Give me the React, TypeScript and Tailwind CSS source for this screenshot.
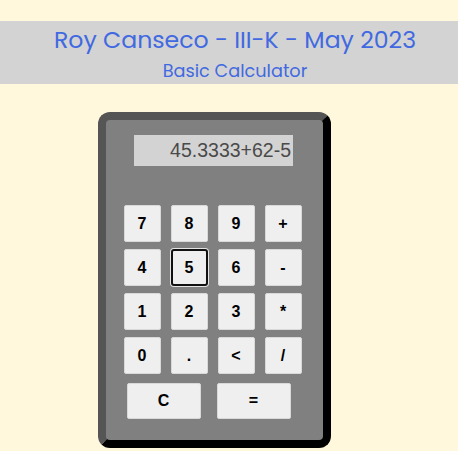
const rows = [
  ['7', '8', '9', '+'],
  ['4', '5', '6', '-'],
  ['1', '2', '3', '*'],
  ['0', '.', '<', '/'],
];

// Single calculator key
function Key({ label, focused, wide }: { label: string; focused?: boolean; wide?: boolean }) {
  return (
    <button
      className={`flex items-center justify-center bg-[#efefef] text-[16px] font-bold text-black rounded-[2px] ${
        wide ? 'w-[74px] h-[36px]' : 'w-[37px] h-[37px]'
      } ${focused ? 'border-2 border-[#111] rounded-[3px] shadow-[0_0_0_1px_#e5e5e5]' : 'border border-[#d9d9d9]'}`}
    >
      {label}
    </button>
  );
}

export default function App() {
  return (
    <div className="w-[458px] h-[451px] bg-[#fff8dc] font-['Liberation_Sans',Arial,sans-serif] pt-[21px] overflow-hidden">
      {/* Header */}
      <div className="h-[63px] bg-[#d3d3d3] pl-[12px] flex flex-col items-center text-[#4169e1] font-['Poppins','Open_Sans',sans-serif]">
        <h1 className="text-[23.6px] leading-[32px] mt-[3px]">Roy Canseco - III-K - May 2023</h1>
        <h2 className="text-[17.7px] leading-[24px] mt-[3px]">Basic Calculator</h2>
      </div>

      {/* Calculator body */}
      <div className="mt-[28px] ml-[98px] w-[233px] h-[336px] rounded-[12px] border-[8px] border-t-[#555] border-l-[#555] border-r-black border-b-black bg-[#808080] flex flex-col items-center">
        <div className="mt-[15px] ml-[-2px] w-[159px] h-[31px] bg-[#d3d3d3] text-[#4a4a4a] text-[19.5px] leading-[31px] text-right pr-[2px]">
          45.3333+62-5
        </div>

        <div className="mt-[39px] grid grid-cols-4 gap-x-[10px] gap-y-[7px] ml-[-4px]">
          {rows.flat().map((k) => (
            <Key key={k} label={k} focused={k === '5'} />
          ))}
        </div>

        <div className="mt-[9px] flex gap-[16px] ml-[-12px]">
          <Key label="C" wide />
          <Key label="=" wide />
        </div>
      </div>
    </div>
  );
}
